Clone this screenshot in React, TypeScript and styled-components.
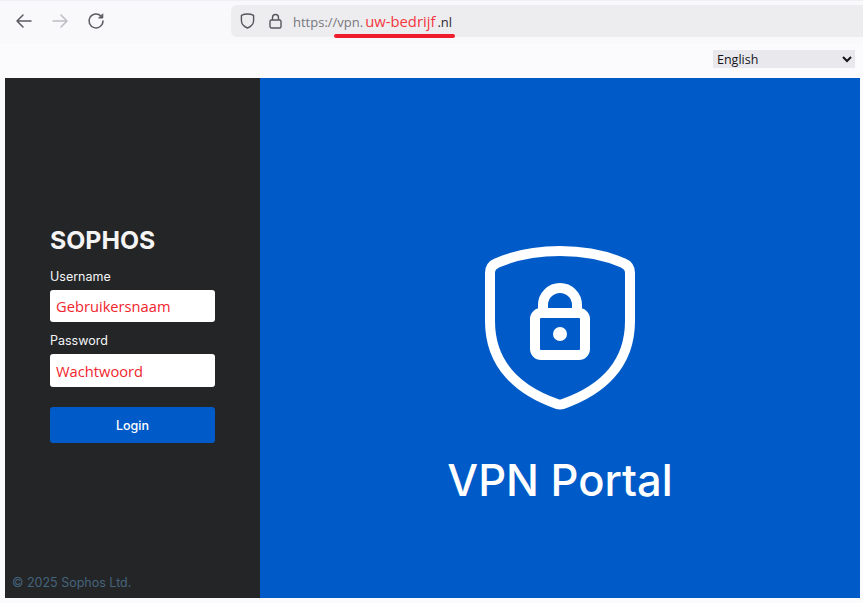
import React from 'react';
import styled, { createGlobalStyle } from 'styled-components';

const GlobalStyle = createGlobalStyle`
	html,
	body {
		margin: 0;
		padding: 0;
		background: #fbfbfd;
		overflow: hidden;
	}
	* {
		box-sizing: border-box;
	}
`;

const Page = styled.div`
	width: 863px;
	height: 603px;
	display: flex;
	flex-direction: column;
	font-family: 'Inter', 'Liberation Sans', sans-serif;
`;

const Toolbar = styled.div`
	height: 44px;
	padding: 4px 0 7px 13px;
	display: flex;
	align-items: stretch;
	background: #f9f9fb;
	border-top: 1px solid #f0f0f4;
`;

const NavButtons = styled.div`
	width: 218px;
	display: flex;
	align-items: center;
	gap: 14px;
`;

const UrlBar = styled.div`
	position: relative;
	flex: 1;
	display: flex;
	align-items: center;
	padding-left: 9px;
	gap: 14px;
	background: #ededf0;
	border-radius: 6px 0 0 6px;
`;

const UrlText = styled.div`
	margin-left: -3px;
	font-family: 'Open Sans', 'Noto Sans', sans-serif;
	font-size: 13px;
	color: #77777c;
	white-space: nowrap;
`;

const UrlHost = styled.span`
	margin-left: 2px;
	color: #f4363d;
	font-size: 14.8px;
`;

const UrlTld = styled.span`
	color: #2b2a33;
	font-size: 13px;
	margin-left: 2px;
`;

const Underline = styled.div`
	position: absolute;
	left: 103px;
	top: 29px;
	width: 121px;
	height: 4px;
	border-radius: 2px;
	background: #ee1c2c;
`;

const LangRow = styled.div`
	height: 34px;
	padding: 6px 8px 0 0;
	display: flex;
	justify-content: flex-end;
	align-items: flex-start;
`;

const LangSelect = styled.select`
	width: 142px;
	height: 18px;
	padding: 0;
	border: none;
	background-color: #e9e9ed;
	color: #15141a;
	font-family: 'Open Sans', 'Noto Sans', sans-serif;
	font-size: 12.5px;
`;

const Main = styled.main`
	width: 855px;
	height: 520px;
	margin-left: 5px;
	display: flex;
`;

const Sidebar = styled.aside`
	width: 255px;
	padding: 151px 45px 7px 7px;
	display: flex;
	flex-direction: column;
	background: #242527;
`;

const Form = styled.form`
	padding-left: 38px;
	display: flex;
	flex-direction: column;
`;

const Logo = styled.div`
	height: 22px;
	margin-bottom: 18px;
	color: #f4f4f4;
	font-family: 'Inter', sans-serif;
	font-weight: 700;
	font-size: 24.8px;
	line-height: 22px;
	white-space: nowrap;
`;

const Label = styled.label`
	display: block;
	height: 15px;
	margin-bottom: 6px;
	color: #f3f6f8;
	font-size: 12.5px;
	line-height: 15px;
`;

const Field = styled.div<{ $height: number }>`
	width: 165px;
	height: ${(p) => p.$height}px;
	margin-bottom: 11px;
	padding-left: 6px;
	display: flex;
	align-items: center;
	background: #fff;
	border-radius: 3px;
	color: #f0252d;
	font-family: 'Open Sans', 'Noto Sans', sans-serif;
	font-size: 14.7px;
`;

const LoginButton = styled.button`
	width: 165px;
	height: 36px;
	margin-top: 9px;
	border: none;
	border-radius: 3px;
	background: #005bc8;
	color: #fff;
	font-family: 'Inter', sans-serif;
	font-size: 12.5px;
	font-weight: 500;
`;

const Copyright = styled.div`
	margin-top: auto;
	color: #44647c;
	font-size: 12.5px;
	line-height: 16px;
`;

const Hero = styled.section`
	flex: 1;
	padding-top: 168px;
	display: flex;
	flex-direction: column;
	align-items: center;
	background: #005bc8;
`;

const HeroTitle = styled.h1`
	margin: 40px 0 0;
	color: #fff;
	font-family: 'Inter', 'Roboto', sans-serif;
	font-size: 43.5px;
	font-weight: 500;
	line-height: 60px;
`;

const NavIcon = ({ faded, children }: { faded?: boolean; children: React.ReactNode }) => (
	<svg
		width="22"
		height="22"
		viewBox="0 0 22 22"
		fill="none"
		stroke={faded ? '#bdbdc2' : '#5b5b60'}
		strokeWidth="1.5"
		strokeLinecap="round"
		strokeLinejoin="round"
	>
		{children}
	</svg>
);

const ShieldLock = () => (
	<svg width="150" height="164" viewBox="0 0 150 164" fill="none" stroke="#fff" strokeWidth="10">
		<path d="M75 5C100 5 122 10 138 17C143 19 145 23 145 27V75C145 120 115 145 78 158Q75 159 72 158C35 145 5 120 5 75V27C5 23 7 19 12 17C28 10 50 5 75 5Z" />
		<rect x="50" y="67" width="50" height="42" rx="6" />
		<path d="M58 67V59A17 17 0 0 1 92 59V67" />
		<circle cx="75" cy="88" r="7" fill="#fff" stroke="none" />
	</svg>
);

export default function App() {
	return (
		<Page>
			<GlobalStyle />
			<Toolbar>
				<NavButtons>
					<NavIcon>
						<path d="M18 11H4M10 5l-6 6 6 6" />
					</NavIcon>
					<NavIcon faded>
						<path d="M4 11h14M12 5l6 6-6 6" />
					</NavIcon>
					<NavIcon>
						<path d="M16 6A7 7 0 1 0 18 11" />
						<path d="M17.800 4.200v3.800h-3.800z" fill="#5b5b60" strokeWidth="1" />
					</NavIcon>
				</NavButtons>
				<UrlBar>
					<svg width="15" height="16" viewBox="0 0 15 16" fill="none" stroke="#56565c" strokeWidth="1.4" strokeLinejoin="round">
						<path d="M7.5 1C9.5 1 12 1.6 13.6 2.4V7.5C13.6 11 11 13.6 7.5 15C4 13.6 1.4 11 1.4 7.5V2.4C3 1.6 5.500 1 7.500 1Z" />
					</svg>
					<svg width="13" height="16" viewBox="0 0 13 16" fill="none" stroke="#56565c" strokeWidth="1.4">
						<rect x="1" y="7" width="11" height="8" rx="1.500" />
						<path d="M3.500 7V4.500A3 3 0 0 1 9.500 4.500V7" />
					</svg>
					<UrlText>
						https://vpn.<UrlHost>uw-bedrijf</UrlHost>
						<UrlTld>.nl</UrlTld>
					</UrlText>
					<Underline />
				</UrlBar>
			</Toolbar>
			<LangRow>
				<LangSelect defaultValue="en">
					<option value="en">English</option>
				</LangSelect>
			</LangRow>
			<Main>
				<Sidebar>
					<Form>
						<Logo>SOPHOS</Logo>
						<Label>Username</Label>
						<Field $height={32}>Gebruikersnaam</Field>
						<Label>Password</Label>
						<Field $height={33}>Wachtwoord</Field>
						<LoginButton type="button">Login</LoginButton>
					</Form>
					<Copyright>© 2025 Sophos Ltd.</Copyright>
				</Sidebar>
				<Hero>
					<ShieldLock />
					<HeroTitle>VPN Portal</HeroTitle>
				</Hero>
			</Main>
		</Page>
	);
}
